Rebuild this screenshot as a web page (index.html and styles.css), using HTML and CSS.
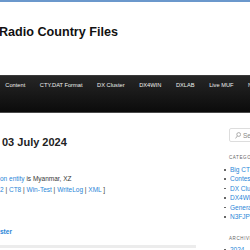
FILE: index.html
```html
<!DOCTYPE html>
<html>
<head>
<meta charset="utf-8">
<link rel="stylesheet" href="styles.css">
</head>
<body>
<div class="page">
  <header class="branding">
    <h1 class="site-title">Radio Country Files</h1>
  </header>
  <nav class="access">
    <ul class="menu">
      <li><a href="#">Content</a></li>
      <li><a href="#">CTY.DAT Format</a></li>
      <li><a href="#">DX Cluster</a></li>
      <li><a href="#">DX4WIN</a></li>
      <li><a href="#">DXLAB</a></li>
      <li><a href="#">Live MUF</a></li>
      <li><a href="#">N3FJP</a></li>
    </ul>
  </nav>
  <div class="main">
    <div class="content">
      <article class="post">
        <h2 class="entry-title">03 July 2024</h2>
        <div class="entry-content">
          <p><a href="#">on entity</a> is Myanmar, XZ<br><a href="#">2</a> | <a href="#">CT8</a> | <a href="#">Win-Test</a> | <a href="#">WriteLog</a> | <a href="#">XML</a> ]</p>
        </div>
        <footer class="entry-meta"><a href="#">ster</a></footer>
      </article>
      <div class="separator"></div>
    </div>
    <aside class="secondary">
      <form class="searchform">
        <svg class="search-icon" width="6" height="7" viewBox="0 0 6 7"><circle cx="3.7" cy="2.5" r="1.9" fill="none" stroke="#999" stroke-width="0.8"/><line x1="2.4" y1="3.9" x2="0.6" y2="6.4" stroke="#999" stroke-width="0.8"/></svg>
        <span class="search-text">Search</span>
      </form>
      <section class="widget">
        <h3 class="widget-title">Categories</h3>
        <ul class="widget-list">
          <li><a href="#">Big CTY</a></li>
          <li><a href="#">Contest</a></li>
          <li><a href="#">DX Cluster</a></li>
          <li><a href="#">DX4WIN</a></li>
          <li><a href="#">General</a></li>
          <li><a href="#">N3FJP</a></li>
        </ul>
      </section>
      <section class="widget archives">
        <h3 class="widget-title">Archives</h3>
        <ul class="widget-list">
          <li><a href="#">2024</a></li>
        </ul>
      </section>
    </aside>
  </div>
</div>
</body>
</html>
```
FILE: styles.css
```css
html, body {
  margin: 0;
  padding: 0;
  overflow: hidden;
  background: #fff;
}
body {
  font-family: "Liberation Sans", Arial, sans-serif;
  color: #373737;
}
.page {
  width: 250px;
  border-top: 2px solid #6b98cc;
}
a {
  color: #2a86d8;
  text-decoration: none;
}
.branding {
  padding-top: 24px;
  padding-bottom: 36px;
}
.site-title {
  margin: 0 0 0 -1px;
  font-size: 12.6px;
  line-height: 13px;
  font-weight: bold;
  color: #111;
  white-space: nowrap;
}
.access {
  height: 38px;
  box-sizing: border-box;
  background: linear-gradient(#262626, #0b0b0b);
  border-top: 1px solid #3a3a3a;
  border-bottom: 1px solid #4a4a4a;
  overflow: hidden;
}
.menu {
  list-style: none;
  margin: -1px 0 0 -2px;
  padding: 0;
  display: flex;
  white-space: nowrap;
}
.menu a {
  display: block;
  padding: 0 7.3px;
  font-size: 5.7px;
  line-height: 20px;
  color: #eee;
}
.main {
  display: flex;
  width: 300px;
}
.content {
  width: 196px;
  flex: none;
}
.entry-title {
  margin: 24px 0 0 2px;
  font-size: 11px;
  line-height: 11px;
  font-weight: bold;
  color: #222;
  white-space: nowrap;
}
.entry-content p {
  margin: 25px 0 0 0;
  font-size: 6.5px;
  line-height: 11px;
  white-space: nowrap;
}
.entry-meta {
  margin-top: 31px;
  font-size: 6.5px;
  line-height: 11px;
  font-weight: bold;
}
.separator {
  margin-top: 8px;
  height: 3px;
  background: #ececec;
}
.secondary {
  margin-left: 33px;
  width: 70px;
  flex: none;
}
.searchform {
  margin: 15px 0 0 0;
  height: 14px;
  box-sizing: border-box;
  border: 1px solid #ddd;
  border-radius: 2px;
  display: flex;
  align-items: center;
  padding-left: 5px;
  gap: 2px;
}
.search-icon {
  display: block;
}
.search-text {
  font-size: 6.5px;
  color: #888;
}
.widget {
  margin-top: 13px;
}
.widget-title {
  margin: 0;
  font-size: 4.5px;
  line-height: 6px;
  font-weight: normal;
  text-transform: uppercase;
  letter-spacing: 0.6px;
  color: #666;
}
.widget-list {
  margin: 4px 0 0 0;
  padding: 0 0 0 1px;
  list-style: none;
}
.widget-list li {
  font-size: 6.5px;
  line-height: 9.4px;
  white-space: nowrap;
  position: relative;
}
.widget-list li::before {
  content: "";
  position: absolute;
  left: -6px;
  top: 4px;
  width: 1.5px;
  height: 1.5px;
  background: #666;
}
.archives {
  margin-top: 15px;
}
.archives .widget-list {
  margin-top: 3px;
}
```
